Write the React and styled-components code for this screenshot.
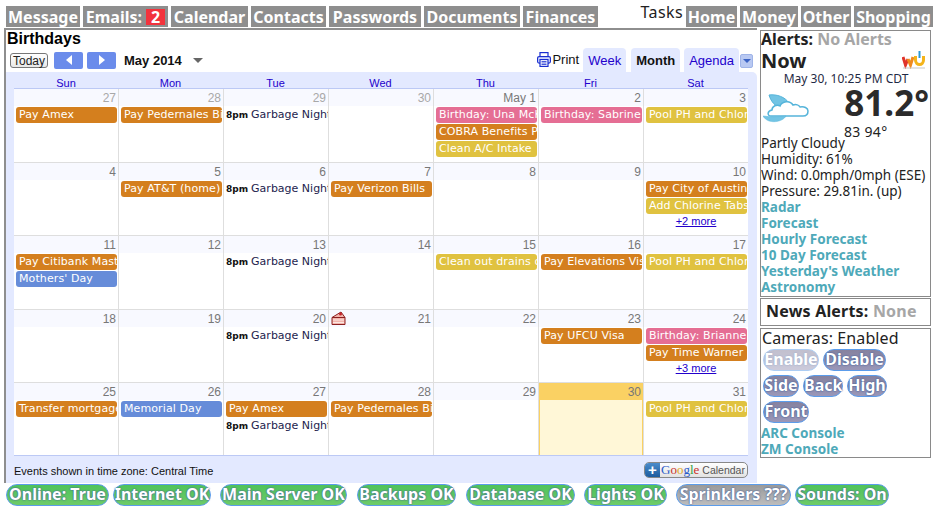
import React from 'react';
import styled, { createGlobalStyle } from 'styled-components';

const GlobalStyle = createGlobalStyle`
  html, body {
    margin: 0;
    padding: 0;
    background: #fff;
    font-family: "Noto Sans", sans-serif;
  }
`;

const Page = styled.div`
  width: 937px;
  height: 513px;
  overflow: hidden;
  box-sizing: border-box;
  padding: 6px 0 0 6px;
`;

const TopBar = styled.div`
  display: flex;
  justify-content: space-between;
  height: 21px;
  padding-right: 4px;
  margin-bottom: 1px;
`;

const TabGroup = styled.div`
  display: flex;
  gap: 3px;
  align-items: flex-end;
`;

const NavTab = styled.a`
  display: block;
  box-sizing: border-box;
  width: ${(p) => p.$w}px;
  height: 21px;
  line-height: 22px;
  background: #8e8e8e;
  color: #fff;
  font-weight: 700;
  font-size: 16px;
  text-align: center;
  white-space: nowrap;
`;

const Badge = styled.span`
  display: inline-block;
  background: #f2333c;
  margin-left: 4px;
  padding: 0 5px;
  height: 16px;
  line-height: 17px;
`;

const TasksLabel = styled.span`
  font-size: 16px;
  line-height: 13px;
  letter-spacing: 0.4px;
  align-self: flex-start;
  color: #222;
`;

const Main = styled.div`
  display: flex;
  margin-left: -2px;
`;

const CalendarPanel = styled.div`
  width: 753px;
  height: 455px;
  box-sizing: border-box;
  border-left: 2px solid #8e8e8e;
  border-top: 2px solid #8e8e8e;
  display: flex;
  flex-direction: column;
  font-family: "Liberation Sans", Arial, sans-serif;
`;

const Title = styled.div`
  font-size: 16px;
  font-weight: 700;
  color: #000;
  line-height: 18px;
  padding-left: 1px;
`;

const Toolbar = styled.div`
  display: flex;
  align-items: center;
  height: 24px;
  padding-left: 4px;
`;

const TodayButton = styled.button`
  width: 38px;
  height: 15px;
  padding: 0;
  border: 1px solid #777;
  border-radius: 3px;
  background: linear-gradient(#fff, #e8e8e8);
  font: 12px "Liberation Sans", Arial, sans-serif;
  color: #222;
  margin-right: 6px;
`;

const ArrowButton = styled.button`
  width: 29px;
  height: 17px;
  padding: 0;
  border: 0;
  border-radius: 2px;
  background: #6b8ceb;
  margin-right: 4px;
  display: flex;
  align-items: center;
  justify-content: center;
`;

const Arrow = styled.span`
  width: 0;
  height: 0;
  border-top: 5px solid transparent;
  border-bottom: 5px solid transparent;
  ${(p) => (p.$left ? 'border-right: 6px solid #fff;' : 'border-left: 6px solid #fff;')}
`;

const MonthLabel = styled.span`
  font-size: 13px;
  font-weight: 700;
  color: #111;
  margin-left: 4px;
`;

const MonthCaret = styled.span`
  width: 0;
  height: 0;
  margin: 1px 0 0 11px;
  border-left: 5px solid transparent;
  border-right: 5px solid transparent;
  border-top: 5px solid #666;
`;

const ViewTabs = styled.div`
  margin-left: auto;
  display: flex;
  align-items: flex-end;
  align-self: flex-end;
  height: 24px;
  padding-right: 4px;
`;

const PrintLink = styled.span`
  display: flex;
  align-items: center;
  gap: 1px;
  align-self: flex-start;
  height: 22px;
  font-size: 13px;
  color: #111;
  margin-right: 4px;
`;

const ViewTab = styled.span`
  height: 24px;
  line-height: 26px;
  padding: 0 5px;
  margin-right: ${(p) => p.$gap || 0}px;
  font-size: 13px;
  background: #e3e9ff;
  border-radius: 4px 4px 0 0;
  color: ${(p) => (p.$active ? '#111' : '#2200cc')};
  font-weight: ${(p) => (p.$active ? 700 : 400)};
`;

const ViewMenu = styled.span`
  align-self: flex-start;
  margin: 6px 0 0 1px;
  width: 13px;
  height: 14px;
  box-sizing: border-box;
  border: 1px solid #9fb4e8;
  border-radius: 2px;
  background: #b9c9f2;
  display: flex;
  align-items: center;
  justify-content: center;
  &::after {
    content: '';
    border-left: 4px solid transparent;
    border-right: 4px solid transparent;
    border-top: 4px solid #3b63c4;
  }
`;

const Frame = styled.div`
  flex: 1;
  background: #e3e9ff;
  border-radius: 0 5px 0 0;
  padding: 5px 9px 0 8px;
  display: flex;
  flex-direction: column;
`;

const DayNames = styled.div`
  display: grid;
  grid-template-columns: 104px repeat(6, 105px);
  height: 11px;
  line-height: 12px;
`;

const DayName = styled.div`
  text-align: center;
  font-size: 11px;
  color: #2200cc;
`;

const Grid = styled.div`
  border-top: 1px solid #bcc9f5;
  border-bottom: 1px solid #bcc9f5;
  display: grid;
  grid-template-columns: 104px repeat(6, 105px);
  grid-template-rows: 73px 73px 74px 73px 73px;
  width: 734px;
  background: #fff;
  overflow: hidden;
`;

const Cell = styled.div`
  box-sizing: border-box;
  border-left: ${(p) => (p.$first ? '0' : '1px solid #dedede')};
  border-top: ${(p) => (p.$top ? '0' : '1px solid #dedede')};
  min-width: 0;
  overflow: hidden;
  padding-bottom: 1px;
  background: ${(p) => (p.$today ? '#fff7d7' : '#fff')};
  ${(p) => p.$today && 'box-shadow: inset 1px 0 0 #fad163, inset -1px 0 0 #fad163;'}
`;

const DateStrip = styled.div`
  display: flex;
  justify-content: space-between;
  align-items: center;
  height: 17px;
  padding: 0 2px;
  margin-bottom: 1px;
  background: ${(p) => (p.$today ? '#fad163' : '#f8f9ff')};
  font-size: 12px;
  color: ${(p) => (p.$dim ? '#a8a8a8' : '#777')};
`;

const DateNumber = styled.span`
  margin-left: auto;
`;

const Chip = styled.div`
  height: 16px;
  line-height: 16px;
  margin: 0 1px 1px 2px;
  padding-left: 3px;
  border-radius: 3px;
  background: ${(p) => p.$color};
  color: #fff;
  font-family: "DejaVu Sans", sans-serif;
  font-size: 11px;
  letter-spacing: 0.1px;
  white-space: nowrap;
  overflow: hidden;
`;

const TimedEvent = styled.div`
  height: 16px;
  line-height: 16px;
  margin: 0 0 1px 2px;
  font-family: "DejaVu Sans", sans-serif;
  font-size: 11px;
  color: #1d1d4e;
  white-space: nowrap;
  overflow: hidden;
`;

const EventTime = styled.b`
  font-size: 9px;
  color: #111;
  margin-right: 3px;
`;

const MoreLink = styled.div`
  text-align: center;
  font-size: 11px;
  line-height: 13px;
  color: #2200cc;
  text-decoration: underline;
`;

const FrameFooter = styled.div`
  display: flex;
  justify-content: space-between;
  align-items: center;
  height: 27px;
  font-size: 11px;
  color: #111;
`;

const ZoneNote = styled.span`
  margin-top: 2px;
`;

const GoogleButton = styled.span`
  display: flex;
  align-items: center;
  height: 16px;
  width: 104px;
  box-sizing: border-box;
  border: 1px solid #888;
  border-radius: 5px;
  background: linear-gradient(#fff, #e2e2e2);
  font-size: 10.5px;
  color: #555;
  overflow: hidden;
`;

const PlusBox = styled.span`
  width: 15px;
  height: 14px;
  background: linear-gradient(#4b8ccb, #1d5c9f);
  color: #fff;
  font-size: 15px;
  font-weight: 700;
  line-height: 14px;
  text-align: center;
  margin-right: 1px;
`;

const GoogleWord = styled.span`
  font-family: "Liberation Serif", serif;
  font-size: 13px;
  margin-right: 3px;
`;

const GoogleLetter = styled.span`
  color: ${(p) => p.$color};
`;

const Sidebar = styled.div`
  width: 171px;
  margin-left: 3px;
  margin-top: 2px;
  display: flex;
  flex-direction: column;
  font-size: 13.5px;
  color: #222;
`;

const Box = styled.div`
  box-sizing: border-box;
  border: 1px solid #8a8a8a;
  height: ${(p) => p.$height}px;
  margin-bottom: ${(p) => p.$gap || 0}px;
  overflow: hidden;
`;

const AlertLine = styled.div`
  font-weight: 700;
  font-size: 16px;
  line-height: 17px;
  white-space: nowrap;
`;

const Muted = styled.span`
  color: #a6a6a6;
  font-weight: 700;
`;

const NowRow = styled.div`
  display: flex;
  justify-content: space-between;
  align-items: center;
  height: 20px;
  margin-top: 2px;
  font-size: 20px;
  font-weight: 700;
  padding-right: 4px;
`;

const Stamp = styled.div`
  text-align: center;
  font-size: 12px;
  line-height: 15px;
  margin-top: 1px;
  color: #1f2a44;
  padding-left: 1px;
`;

const TempRow = styled.div`
  display: flex;
  align-items: flex-start;
  justify-content: space-between;
  height: 36px;
  padding: 0 1px 0 2px;
`;

const CloudSlot = styled.div`
  margin-top: 8px;
`;

const Temperature = styled.div`
  font-size: 35px;
  font-weight: 700;
  line-height: 34px;
  color: #2b2b2b;
`;

const HighLow = styled.div`
  height: 13px;
  line-height: 20px;
  padding-left: 83px;
  font-size: 14px;
  letter-spacing: 0.3px;
`;

const InfoLine = styled.div`
  line-height: 16px;
  white-space: nowrap;
`;

const SideLink = styled.div`
  color: #4ea9b9;
  font-weight: 700;
  line-height: 16px;
  white-space: nowrap;
`;

const NewsLine = styled.div`
  font-weight: 700;
  font-size: 16px;
  line-height: 25px;
  padding-left: 5px;
  letter-spacing: 0.2px;
  white-space: nowrap;
`;

const CameraTitle = styled.div`
  font-size: 16px;
  line-height: 18px;
  margin-bottom: 2px;
  padding-left: 1px;
  letter-spacing: 0.1px;
`;

const PillWrap = styled.div`
  display: flex;
  flex-wrap: wrap;
  gap: 4px;
  padding: 0 12px 2px 2px;
`;

const Pill = styled.span`
  display: inline-block;
  box-sizing: border-box;
  width: ${(p) => p.$w}px;
  height: 22px;
  line-height: 19px;
  border: 1px solid #5b9ceb;
  border-radius: 11px;
  font-weight: 700;
  font-size: 16px;
  color: #fff;
  text-align: center;
  white-space: nowrap;
  text-shadow: 0 0 2px #3f5f9c, 0 0 1px #3f5f9c;
  background: ${(p) => p.$bg};
  opacity: ${(p) => (p.$faded ? 0.5 : 1)};
`;

const StatusBar = styled.div`
  display: flex;
  height: 22px;
  margin-top: 1px;
`;

const StatusPill = styled(Pill)`
  margin-right: ${(p) => p.$gap}px;
`;

const CHIP = {
  orange: '#d47f1e',
  pink: '#e56e94',
  yellow: '#e0c240',
  blue: '#668cd9',
};

const GREEN = 'linear-gradient(#4fc35a, #6ecb68)';
const GRAY = 'linear-gradient(#9a9a9a, #bdbdbd)';
const PURPLE = 'linear-gradient(#86829f, #9a97b8)';

const garbage = { time: '8pm', text: 'Garbage Night' };
const pool = { text: 'Pool PH and Chlorine', color: 'yellow' };

const WEEKS = [
  [
    { n: '27', dim: true, events: [{ text: 'Pay Amex', color: 'orange' }] },
    { n: '28', dim: true, events: [{ text: 'Pay Pedernales Bill', color: 'orange' }] },
    { n: '29', dim: true, events: [garbage] },
    { n: '30', dim: true },
    {
      n: 'May 1',
      events: [
        { text: 'Birthday: Una McKay', color: 'pink' },
        { text: 'COBRA Benefits Pay', color: 'orange' },
        { text: 'Clean A/C Intake', color: 'yellow' },
      ],
    },
    { n: '2', events: [{ text: 'Birthday: Sabrine', color: 'pink' }] },
    { n: '3', events: [pool] },
  ],
  [
    { n: '4' },
    { n: '5', events: [{ text: 'Pay AT&T (home)', color: 'orange' }] },
    { n: '6', events: [garbage] },
    { n: '7', events: [{ text: 'Pay Verizon Bills', color: 'orange' }] },
    { n: '8' },
    { n: '9' },
    {
      n: '10',
      more: '+2 more',
      events: [
        { text: 'Pay City of Austin', color: 'orange' },
        { text: 'Add Chlorine Tabs', color: 'yellow' },
      ],
    },
  ],
  [
    {
      n: '11',
      events: [
        { text: 'Pay Citibank Master', color: 'orange' },
        { text: "Mothers' Day", color: 'blue' },
      ],
    },
    { n: '12' },
    { n: '13', events: [garbage] },
    { n: '14' },
    { n: '15', events: [{ text: 'Clean out drains on', color: 'yellow' }] },
    { n: '16', events: [{ text: 'Pay Elevations Visa', color: 'orange' }] },
    { n: '17', events: [pool] },
  ],
  [
    { n: '18' },
    { n: '19' },
    { n: '20', events: [garbage] },
    { n: '21', cake: true },
    { n: '22' },
    { n: '23', events: [{ text: 'Pay UFCU Visa', color: 'orange' }] },
    {
      n: '24',
      more: '+3 more',
      events: [
        { text: 'Birthday: Brianne', color: 'pink' },
        { text: 'Pay Time Warner', color: 'orange' },
      ],
    },
  ],
  [
    { n: '25', events: [{ text: 'Transfer mortgage', color: 'orange' }] },
    { n: '26', events: [{ text: 'Memorial Day', color: 'blue' }] },
    { n: '27', events: [{ text: 'Pay Amex', color: 'orange' }, garbage] },
    { n: '28', events: [{ text: 'Pay Pedernales Bill', color: 'orange' }] },
    { n: '29' },
    { n: '30', today: true },
    { n: '31', events: [pool] },
  ],
];

const PrinterIcon = () => (
  <svg width="14" height="15" viewBox="0 0 14 15" fill="none" stroke="#1a2fd0" strokeWidth="1.200">
    <rect x="3" y="0.600" width="8" height="4" fill="#fff" />
    <rect x="0.600" y="4.600" width="12.800" height="6.500" rx="1.500" fill="#e4e9ff" />
    <rect x="3" y="7.500" width="8" height="6.900" fill="#fff" />
    <path d="M4.500 9.500h5M4.500 11h5M4.500 12.500h5" strokeWidth="0.800" />
  </svg>
);

const CakeIcon = () => (
  <svg width="15" height="15" viewBox="0 0 15 15">
    <path d="M1 6.500 10 1l4 5.500v7H1z" fill="#f3b5ad" stroke="#8c2020" strokeWidth="1" />
    <path d="M1 6.500h13" stroke="#8c2020" />
    <path d="M2 9h11M2 11.500h11" stroke="#fbe7e2" />
    <circle cx="9.500" cy="3" r="1.500" fill="#c4242a" />
  </svg>
);

const CloudIcon = () => (
  <svg width="46" height="30" viewBox="0 0 46 30" style={{ display: 'block' }}>
    <path d="M6 1C14 0 22 3 26 9C22 9 19 11 18 14C13 13 8 8 6 1z" fill="#72c4e4" stroke="#55b4da" />
    <path
      d="M8 22C4 22 4 17 9 16C9 12 14 10 17 12C19 7 27 6 30 11C33 10 36 11 37 13C41 12 45 14 45 17C45 20 43 22 40 22z"
      fill="#fff"
      stroke="#55b4da"
      strokeWidth="1.500"
    />
    <path d="M0 22C8 23 14 23 23 22C20 28 5 31 0 22z" fill="#72c4e4" stroke="#55b4da" strokeWidth="0.500" />
  </svg>
);

const WuLogo = () => (
  <svg width="24" height="18" viewBox="0 0 24 18" fill="none" strokeWidth="3">
    <path d="M1 6l2.500 8L6 8" stroke="#e0342a" />
    <path d="M6 8l2.500 6L11 6" stroke="#f08a1d" />
    <path d="M13.500 5v4c0 6 8 6 8 0V5" stroke="#f4b41a" />
    <path d="M17.500 0v7" stroke="#2c9ad6" strokeWidth="2" />
    <path d="M1 17h22" stroke="#c7c7c7" strokeWidth="1" />
  </svg>
);

const GoogleLogo = () => (
  <GoogleWord>
    <GoogleLetter $color="#2a5bc9">G</GoogleLetter>
    <GoogleLetter $color="#c9302a">o</GoogleLetter>
    <GoogleLetter $color="#e0a81c">o</GoogleLetter>
    <GoogleLetter $color="#2a5bc9">g</GoogleLetter>
    <GoogleLetter $color="#2f9e44">l</GoogleLetter>
    <GoogleLetter $color="#c9302a">e</GoogleLetter>
  </GoogleWord>
);

const DayCell = ({ day, first, top }) => (
  <Cell $first={first} $top={top} $today={day.today}>
    <DateStrip $today={day.today} $dim={day.dim}>
      {day.cake && <CakeIcon />}
      <DateNumber>{day.n}</DateNumber>
    </DateStrip>
    {(day.events || []).map((ev) => (ev.time ? (
      <TimedEvent key={ev.text}>
        <EventTime>{ev.time}</EventTime>
        {ev.text}
      </TimedEvent>
    ) : (
      <Chip key={ev.text} $color={CHIP[ev.color]}>{ev.text}</Chip>
    )))}
    {day.more && <MoreLink>{day.more}</MoreLink>}
  </Cell>
);

const DAYS = ['Sun', 'Mon', 'Tue', 'Wed', 'Thu', 'Fri', 'Sat'];

const App = () => (
  <Page>
    <GlobalStyle />
    <TopBar>
      <TabGroup>
        <NavTab $w={74}>Message</NavTab>
        <NavTab $w={85}>Emails:<Badge>2</Badge></NavTab>
        <NavTab $w={77}>Calendar</NavTab>
        <NavTab $w={75}>Contacts</NavTab>
        <NavTab $w={92}>Passwords</NavTab>
        <NavTab $w={96}>Documents</NavTab>
        <NavTab $w={75}>Finances</NavTab>
      </TabGroup>
      <TabGroup>
        <TasksLabel>Tasks</TasksLabel>
        <NavTab $w={51}>Home</NavTab>
        <NavTab $w={58}>Money</NavTab>
        <NavTab $w={50}>Other</NavTab>
        <NavTab $w={79}>Shopping</NavTab>
      </TabGroup>
    </TopBar>
    <Main>
      <CalendarPanel>
        <Title>Birthdays</Title>
        <Toolbar>
          <TodayButton>Today</TodayButton>
          <ArrowButton><Arrow $left /></ArrowButton>
          <ArrowButton><Arrow /></ArrowButton>
          <MonthLabel>May 2014</MonthLabel>
          <MonthCaret />
          <ViewTabs>
            <PrintLink><PrinterIcon />Print</PrintLink>
            <ViewTab $gap={5}>Week</ViewTab>
            <ViewTab $gap={4} $active>Month</ViewTab>
            <ViewTab>Agenda</ViewTab>
            <ViewMenu />
          </ViewTabs>
        </Toolbar>
        <Frame>
          <DayNames>
            {DAYS.map((d) => <DayName key={d}>{d}</DayName>)}
          </DayNames>
          <Grid>
            {WEEKS.map((week, w) => week.map((day, i) => (
              <DayCell key={`${w}-${day.n}`} day={day} first={i === 0} top={w === 0} />
            )))}
          </Grid>
          <FrameFooter>
            <ZoneNote>Events shown in time zone: Central Time</ZoneNote>
            <GoogleButton>
              <PlusBox>+</PlusBox>
              <GoogleLogo />
              Calendar
            </GoogleButton>
          </FrameFooter>
        </Frame>
      </CalendarPanel>
      <Sidebar>
        <Box $height={267} $gap={1}>
          <AlertLine>Alerts: <Muted>No Alerts</Muted></AlertLine>
          <NowRow>Now <WuLogo /></NowRow>
          <Stamp>May 30, 10:25 PM CDT</Stamp>
          <TempRow>
            <CloudSlot><CloudIcon /></CloudSlot>
            <Temperature>81.2°</Temperature>
          </TempRow>
          <HighLow>83 94°</HighLow>
          <InfoLine>Partly Cloudy</InfoLine>
          <InfoLine>Humidity: 61%</InfoLine>
          <InfoLine>Wind: 0.0mph/0mph (ESE)</InfoLine>
          <InfoLine>Pressure: 29.81in. (up)</InfoLine>
          <SideLink>Radar</SideLink>
          <SideLink>Forecast</SideLink>
          <SideLink>Hourly Forecast</SideLink>
          <SideLink>10 Day Forecast</SideLink>
          <SideLink>Yesterday's Weather</SideLink>
          <SideLink>Astronomy</SideLink>
        </Box>
        <Box $height={28} $gap={2}>
          <NewsLine>News Alerts: <Muted>None</Muted></NewsLine>
        </Box>
        <Box $height={130}>
          <CameraTitle>Cameras: Enabled</CameraTitle>
          <PillWrap>
            <Pill $w={56} $bg={PURPLE} $faded>Enable</Pill>
            <Pill $w={63} $bg={PURPLE}>Disable</Pill>
            <Pill $w={36} $bg={PURPLE}>Side</Pill>
            <Pill $w={40} $bg={PURPLE}>Back</Pill>
            <Pill $w={40} $bg={PURPLE}>High</Pill>
            <Pill $w={46} $bg={PURPLE}>Front</Pill>
          </PillWrap>
          <SideLink>ARC Console</SideLink>
          <SideLink>ZM Console</SideLink>
        </Box>
      </Sidebar>
    </Main>
    <StatusBar>
      <StatusPill $w={103} $bg={GREEN} $gap={4}>Online: True</StatusPill>
      <StatusPill $w={98} $bg={GREEN} $gap={9}>Internet OK</StatusPill>
      <StatusPill $w={127} $bg={GREEN} $gap={10}>Main Server OK</StatusPill>
      <StatusPill $w={99} $bg={GREEN} $gap={10}>Backups OK</StatusPill>
      <StatusPill $w={109} $bg={GREEN} $gap={9}>Database OK</StatusPill>
      <StatusPill $w={83} $bg={GREEN} $gap={9}>Lights OK</StatusPill>
      <StatusPill $w={115} $bg={GRAY} $gap={4}>Sprinklers ???</StatusPill>
      <StatusPill $w={94} $bg={GREEN} $gap={0}>Sounds: On</StatusPill>
    </StatusBar>
  </Page>
);

export default App;
